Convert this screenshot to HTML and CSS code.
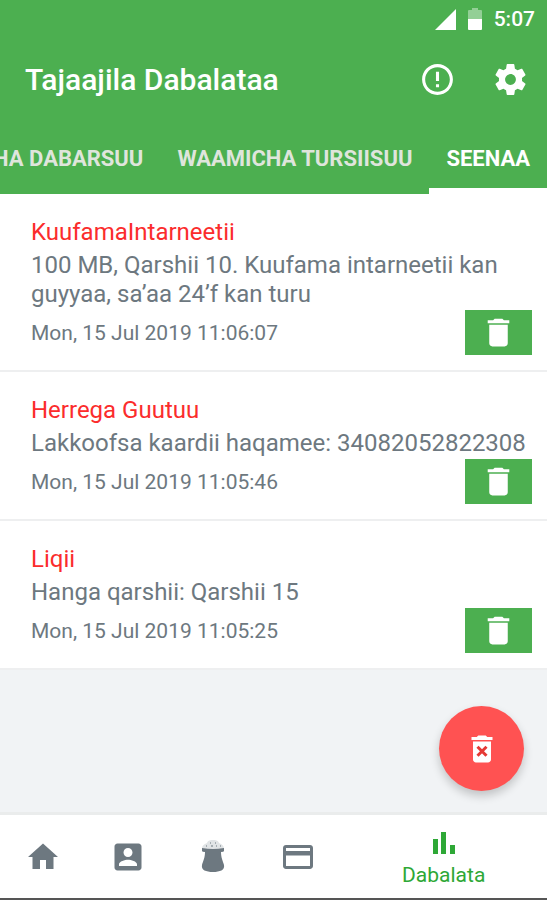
FILE: index.html
```html
<!DOCTYPE html>
<html lang="om">
<head>
    <meta charset="UTF-8">
    <meta name="viewport" content="width=device-width, initial-scale=1.0">
    <title>Tajaajila Dabalataa</title>
    <link rel="stylesheet" href="styles.css">
</head>
<body>
    <svg width="0" height="0" class="sprite" aria-hidden="true">
        <symbol id="icon-delete" viewBox="0 0 24 24">
            <path d="M6 19c0 1.100.9 2 2 2h8c1.100 0 2-.9 2-2V7H6v12zM19 4h-3.500l-1-1h-5l-1 1H5v2h14V4z"/>
        </symbol>
    </svg>

    <header class="header">
        <div class="status-bar">
            <svg class="signal" viewBox="0 0 22 22"><path d="M22 0v22H0z"/></svg>
            <svg class="battery" viewBox="0 0 14 22">
                <path class="battery-empty" d="M4 0h6v2h3a1 1 0 0 1 1 1v8H0V3a1 1 0 0 1 1-1h3z"/>
                <path d="M0 11h14v10a1 1 0 0 1-1 1H1a1 1 0 0 1-1-1z"/>
            </svg>
            <span class="clock">5:07</span>
        </div>
        <div class="app-bar">
            <h1>Tajaajila Dabalataa</h1>
            <button class="icon-button" type="button" aria-label="Info">
                <svg viewBox="0 0 24 24"><path d="M11 15h2v2h-2zm0-8h2v6h-2zm.99-5C6.470 2 2 6.480 2 12s4.470 10 9.990 10C17.520 22 22 17.520 22 12S17.520 2 11.990 2zM12 20c-4.420 0-8-3.580-8-8s3.580-8 8-8 8 3.580 8 8-3.580 8-8 8z"/></svg>
            </button>
            <button class="icon-button" type="button" aria-label="Settings">
                <svg viewBox="0 0 24 24"><path d="M19.430 12.980c.04-.32.07-.64.07-.98s-.03-.66-.07-.98l2.110-1.650c.19-.15.24-.42.12-.64l-2-3.460c-.12-.22-.39-.3-.61-.22l-2.490 1c-.52-.4-1.080-.73-1.690-.98l-.38-2.650C14.460 2.180 14.250 2 14 2h-4c-.25 0-.46.18-.49.42l-.38 2.650c-.61.25-1.170.59-1.690.98l-2.490-1c-.23-.09-.49 0-.61.22l-2 3.460c-.13.22-.07.49.12.64l2.110 1.650c-.04.32-.07.65-.07.98s.03.66.07.98l-2.110 1.650c-.19.15-.24.42-.12.64l2 3.460c.12.22.39.3.61.22l2.490-1c.52.4 1.080.73 1.690.98l.38 2.650c.03.24.24.42.49.42h4c.25 0 .46-.18.49-.42l.38-2.650c.61-.25 1.170-.59 1.690-.98l2.490 1c.23.09.49 0 .61-.22l2-3.460c.12-.22.07-.49-.12-.64l-2.110-1.650zM12 15.500c-1.930 0-3.500-1.570-3.500-3.500s1.570-3.500 3.500-3.500 3.500 1.570 3.500 3.500-1.570 3.500-3.500 3.500z"/></svg>
            </button>
        </div>
        <nav class="tabs">
            <a class="tab" href="#dabarsuu">HA DABARSUU</a>
            <a class="tab" href="#tursiisuu">WAAMICHA TURSIISUU</a>
            <a class="tab active" href="#seenaa">SEENAA</a>
        </nav>
    </header>

    <main class="content">
        <article class="item">
            <h2>KuufamaIntarneetii</h2>
            <p>100 MB, Qarshii 10. Kuufama intarneetii kan guyyaa, sa’aa 24’f kan turu</p>
            <div class="item-footer">
                <time>Mon, 15 Jul 2019 11:06:07</time>
                <button class="delete" type="button" aria-label="Delete"><svg><use href="#icon-delete"/></svg></button>
            </div>
        </article>
        <article class="item">
            <h2>Herrega Guutuu</h2>
            <p>Lakkoofsa kaardii haqamee: 34082052822308</p>
            <div class="item-footer">
                <time>Mon, 15 Jul 2019 11:05:46</time>
                <button class="delete" type="button" aria-label="Delete"><svg><use href="#icon-delete"/></svg></button>
            </div>
        </article>
        <article class="item">
            <h2>Liqii</h2>
            <p>Hanga qarshii: Qarshii 15</p>
            <div class="item-footer">
                <time>Mon, 15 Jul 2019 11:05:25</time>
                <button class="delete" type="button" aria-label="Delete"><svg><use href="#icon-delete"/></svg></button>
            </div>
        </article>
        <button class="fab" type="button" aria-label="Delete all">
            <svg viewBox="0 0 24 24">
                <use href="#icon-delete"/>
                <path class="cross" d="M9 10.500l6 6M15 10.500l-6 6"/>
            </svg>
        </button>
    </main>

    <nav class="bottom-nav">
        <a href="#home" aria-label="Home">
            <svg viewBox="0 0 24 24"><path d="M10 20v-6h4v6h5v-8h3L12 3 2 12h3v8z"/></svg>
        </a>
        <a href="#account" aria-label="Account">
            <svg viewBox="0 0 24 24"><path d="M3 5v14c0 1.100.89 2 2 2h14c1.100 0 2-.9 2-2V5c0-1.100-.9-2-2-2H5c-1.110 0-2 .9-2 2zm12 4c0 1.660-1.340 3-3 3s-3-1.340-3-3 1.340-3 3-3 3 1.340 3 3zm-9 8c0-2 4-3.100 6-3.100s6 1.100 6 3.100v1H6v-1z"/></svg>
        </a>
        <a href="#bundles" aria-label="Bundles">
            <svg viewBox="0 0 32 36">
                <path class="grain" d="M5 10C5 6 8 5 10 4c1-3 4-3 6-3s5 0 6 3c2 1 5 2 5 6z"/>
                <path class="grain-dots" d="M9 7h1M13 4h1M14 7h2M18 4h1M19 7h1M23 7h1"/>
                <path d="M5 9q11 2 22 0v3q0 1-3 1c0 6 2 9 3 13 1 5-4 7-11 7S4 31 5 26c1-4 3-7 3-13q-3 0-3-1z"/>
            </svg>
        </a>
        <a href="#card" aria-label="Card">
            <svg viewBox="0 0 24 24"><path d="M20 4H4c-1.110 0-1.990.89-1.990 2L2 18c0 1.110.89 2 2 2h16c1.110 0 2-.89 2-2V6c0-1.110-.89-2-2-2zm0 14H4v-7h16v7zm0-10H4V6h16v2z"/></svg>
        </a>
        <a class="active" href="#dabalata">
            <svg viewBox="0 0 36 36"><path d="M7 14h5v15H7zM15 7h5v22h-5zM24 20h5v9h-5z"/></svg>
            <span>Dabalata</span>
        </a>
    </nav>
</body>
</html>
```

FILE: styles.css
```css
* {
    box-sizing: border-box;
}

body {
    margin: 0;
    min-height: 100vh;
    display: flex;
    flex-direction: column;
    font-family: Roboto, "Liberation Sans", sans-serif;
    background: #f1f3f5;
    color: #6d7880;
}

h1, h2, p {
    margin: 0;
}

a {
    color: inherit;
    text-decoration: none;
}

button {
    padding: 0;
    border: 0;
    color: inherit;
    cursor: pointer;
}

svg {
    display: block;
    fill: currentColor;
}

.sprite {
    position: absolute;
}

/* Header */
.header {
    background: #4caf50;
    color: #fff;
}

.status-bar {
    display: flex;
    align-items: center;
    justify-content: flex-end;
    gap: 12px;
    height: 38px;
    padding-right: 12px;
}

.signal {
    width: 21px;
    height: 21px;
}

.battery {
    width: 14px;
    height: 22px;
}

.battery-empty {
    opacity: 0.4;
}

.clock {
    font-size: 21px;
    font-weight: 500;
}

.app-bar {
    display: flex;
    align-items: center;
    gap: 36px;
    height: 82px;
    padding: 0 18px 0 25px;
}

.app-bar h1 {
    flex: 1;
    font-size: 30px;
    font-weight: 500;
}

.icon-button {
    background: none;
}

.icon-button svg {
    width: 37px;
    height: 37px;
}

.tabs {
    display: flex;
    justify-content: flex-end;
    height: 74px;
    overflow: hidden;
}

.tab {
    flex: none;
    padding: 4px 17px 0;
    line-height: 70px;
    font-size: 22px;
    font-weight: 700;
    color: #dfe5dc;
    white-space: nowrap;
}

.tab.active {
    color: #fff;
    border-bottom: 6px solid #fff;
}

/* History list */
.content {
    position: relative;
    flex: 1;
}

.item {
    padding: 23px 15px 15px 31px;
    background: #fff;
    border-bottom: 2px solid #eeeff0;
}

.item h2 {
    margin-bottom: 4px;
    font-size: 24px;
    line-height: 30px;
    font-weight: 400;
    color: #fb2c2c;
}

.item p {
    font-size: 24px;
    line-height: 29px;
}

.item-footer {
    display: flex;
    align-items: center;
    justify-content: space-between;
    margin-top: 1px;
}

.item time {
    font-size: 21px;
}

.delete {
    display: flex;
    align-items: center;
    justify-content: center;
    width: 67px;
    height: 45px;
    background: #4caf50;
    color: #fff;
}

.delete svg {
    width: 37px;
    height: 37px;
}

.fab {
    position: absolute;
    right: 23px;
    bottom: 21px;
    display: flex;
    align-items: center;
    justify-content: center;
    width: 85px;
    height: 85px;
    border-radius: 50%;
    background: #ff5252;
    color: #fff;
    box-shadow: 0 5px 10px rgba(0, 0, 0, 0.2);
}

.fab svg {
    width: 36px;
    height: 36px;
}

.fab .cross {
    stroke: #e53935;
    stroke-width: 2;
}

/* Bottom navigation */
.bottom-nav {
    display: flex;
    height: 88px;
    background: #fff;
    border-top: 3px solid #eaecec;
    border-bottom: 2px solid #555;
}

.bottom-nav a {
    flex: 14;
    display: flex;
    flex-direction: column;
    align-items: center;
    justify-content: center;
}

.bottom-nav a.active {
    flex: 34;
    color: #2ea836;
    font-size: 21px;
    line-height: 28px;
}

.bottom-nav svg {
    width: 36px;
    height: 36px;
}

.grain {
    fill: #e1e4e6;
}

.grain-dots {
    stroke: #6d7880;
    stroke-width: 1;
}
```
